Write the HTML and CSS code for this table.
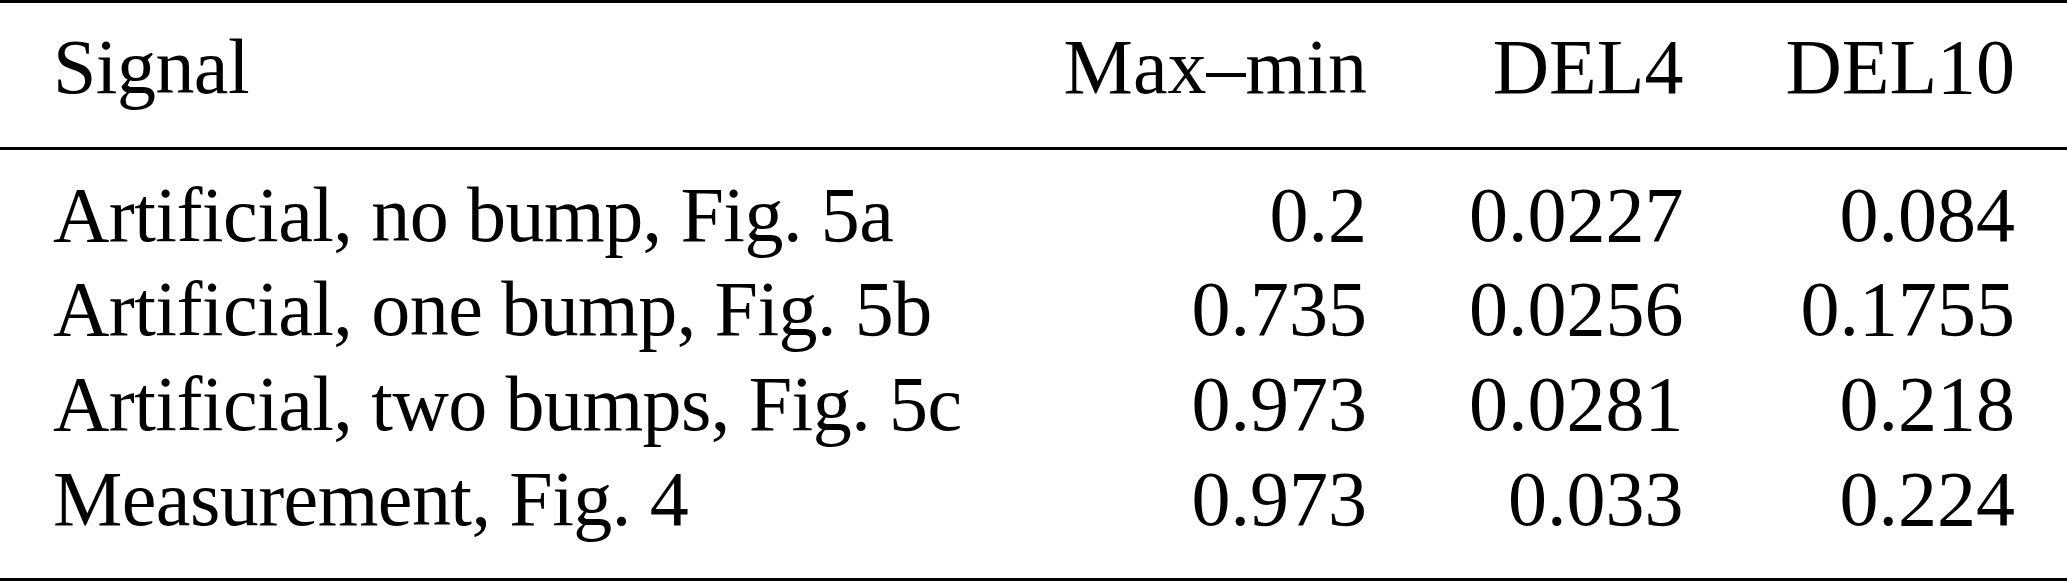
FILE: index.html
```html
<!DOCTYPE html>
<html lang="en">
<head>
  <meta charset="UTF-8">
  <meta name="viewport" content="width=device-width, initial-scale=1.0">
  <title>Signal table</title>
  <link rel="stylesheet" href="styles.css">
</head>
<body>

  <table class="results">
    <thead>
      <tr>
        <th class="label">Signal</th>
        <th class="num">Max–min</th>
        <th class="num">DEL4</th>
        <th class="num">DEL10</th>
      </tr>
    </thead>
    <tbody>
      <tr>
        <td class="label">Artificial, no bump, Fig. 5a</td>
        <td class="num">0.2</td>
        <td class="num">0.0227</td>
        <td class="num">0.084</td>
      </tr>
      <tr>
        <td class="label">Artificial, one bump, Fig. 5b</td>
        <td class="num">0.735</td>
        <td class="num">0.0256</td>
        <td class="num">0.1755</td>
      </tr>
      <tr>
        <td class="label">Artificial, two bumps, Fig. 5c</td>
        <td class="num">0.973</td>
        <td class="num">0.0281</td>
        <td class="num">0.218</td>
      </tr>
      <tr>
        <td class="label">Measurement, Fig. 4</td>
        <td class="num">0.973</td>
        <td class="num">0.033</td>
        <td class="num">0.224</td>
      </tr>
    </tbody>
  </table>

</body>
</html>
```

FILE: styles.css
```css
body {
  margin: 0;
  background-color: #fff;
  color: #000;
  font-family: "Liberation Serif", "DejaVu Serif", serif;
}

.results {
  width: 100%;
  border-collapse: separate;
  border-spacing: 0;
  font-size: 78px;
  line-height: 94.7px;
}

.results th,
.results td {
  padding: 0 51px;
  font-weight: normal;
  white-space: nowrap;
}

.results th:first-child,
.results td:first-child {
  padding-left: 53px;
}

.results th:last-child,
.results td:last-child {
  padding-right: 54px;
}

.label {
  text-align: left;
  width: 100%;
  letter-spacing: -0.55px;
}

.num {
  text-align: right;
}

/* booktabs style rules */
.results th {
  border-top: 3px solid #000;
  border-bottom: 3px solid #000;
  padding-top: 17px;
  padding-bottom: 32px;
}

.results tbody tr:first-child td {
  padding-top: 18px;
}

.results tbody tr:last-child td {
  padding-bottom: 31px;
  border-bottom: 3px solid #000;
}
```
